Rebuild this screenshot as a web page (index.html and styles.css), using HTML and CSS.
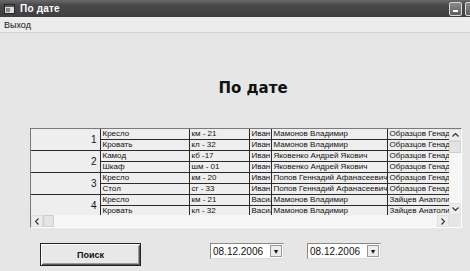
FILE: index.html
```html
<!DOCTYPE html>
<html lang="ru">
<head>
    <meta charset="UTF-8">
    <title>По дате</title>
    <link rel="stylesheet" href="styles.css">
</head>
<body>
    <div class="window">
        <!-- заголовок окна -->
        <div class="titlebar">
            <svg class="app-icon" width="11" height="10" viewBox="0 0 11 10">
                <rect x="0.5" y="0.5" width="10" height="9" fill="#ddd" stroke="#222"/>
                <rect x="1" y="1" width="9" height="2" fill="#555"/>
                <rect x="2" y="4" width="4" height="4" fill="#888"/>
            </svg>
            <span class="title-text">По дате</span>
            <div class="title-btns">
                <span class="tbtn"><span class="min-bar"></span></span>
                <span class="tbtn tbtn-cut"></span>
            </div>
        </div>

        <!-- меню -->
        <div class="menubar">
            <span class="menu-item">Выход</span>
        </div>

        <div class="content">
            <h1 class="heading">По дате</h1>

            <!-- таблица -->
            <div class="grid-wrap">
                <div class="grid-area">
                    <table class="grid">
                        <colgroup>
                            <col style="width:69px">
                            <col style="width:89px">
                            <col style="width:60px">
                            <col style="width:22px">
                            <col style="width:116px">
                            <col style="width:80px">
                        </colgroup>
                        <tr><td class="rh" rowspan="2">1</td><td>Кресло</td><td>км - 21</td><td>Иван</td><td>Мамонов Владимир</td><td>Образцов Генадий</td></tr>
                        <tr><td>Кровать</td><td>кл - 32</td><td>Иван</td><td>Мамонов Владимир</td><td>Образцов Генадий</td></tr>
                        <tr><td class="rh" rowspan="2">2</td><td>Камод</td><td>кб -17</td><td>Иван</td><td>Яковенко Андрей Якович</td><td>Образцов Генадий</td></tr>
                        <tr><td>Шкаф</td><td>шм - 01</td><td>Иван</td><td>Яковенко Андрей Якович</td><td>Образцов Генадий</td></tr>
                        <tr><td class="rh" rowspan="2">3</td><td>Кресло</td><td>км - 20</td><td>Иван</td><td>Попов Геннадий Афанасеевич</td><td>Образцов Генадий</td></tr>
                        <tr><td>Стол</td><td>сг - 33</td><td>Иван</td><td>Попов Геннадий Афанасеевич</td><td>Образцов Генадий</td></tr>
                        <tr><td class="rh" rowspan="2">4</td><td>Кресло</td><td>км - 21</td><td>Васил</td><td>Мамонов Владимир</td><td>Зайцев Анатолий</td></tr>
                        <tr><td>Кровать</td><td>кл - 32</td><td>Васил</td><td>Мамонов Владимир</td><td>Зайцев Анатолий</td></tr>
                    </table>
                </div>
                <div class="vscroll">
                    <span class="sbtn"><svg width="7" height="4" viewBox="0 0 7 4"><path d="M0.5 3.5 L3.5 0.5 L6.5 3.5" fill="none" stroke="#333" stroke-width="1.2"/></svg></span>
                    <span class="thumb"></span>
                    <span class="vspace"></span>
                    <span class="sbtn"><svg width="7" height="4" viewBox="0 0 7 4"><path d="M0.5 0.5 L3.5 3.5 L6.5 0.5" fill="none" stroke="#333" stroke-width="1.2"/></svg></span>
                </div>
                <div class="hscroll">
                    <span class="sbtn"><svg width="4" height="7" viewBox="0 0 4 7"><path d="M3.5 0.5 L0.5 3.5 L3.5 6.5" fill="none" stroke="#333" stroke-width="1.2"/></svg></span>
                    <span class="thumb"></span>
                    <span class="hspace"></span>
                    <span class="sbtn"><svg width="4" height="7" viewBox="0 0 4 7"><path d="M0.5 0.5 L3.5 3.5 L0.5 6.5" fill="none" stroke="#333" stroke-width="1.2"/></svg></span>
                </div>
                <div class="corner"></div>
            </div>

            <!-- кнопка и даты -->
            <div class="bottom">
                <button class="search-btn">Поиск</button>
                <div class="combo combo-first">
                    <span class="combo-text">08.12.2006</span>
                    <span class="combo-arrow">&#9662;</span>
                </div>
                <div class="combo">
                    <span class="combo-text">08.12.2006</span>
                    <span class="combo-arrow">&#9662;</span>
                </div>
            </div>
        </div>
    </div>
</body>
</html>
```

FILE: styles.css
```css
body {
    margin: 0;
    width: 470px;
    height: 271px;
    overflow: hidden;
    background: #e6e6e6;
    font-family: "Liberation Sans", Arial, sans-serif;
    color: #111;
}
.window {
    display: flex;
    flex-direction: column;
    height: 271px;
}
.titlebar {
    height: 17px;
    display: flex;
    align-items: center;
    padding-left: 4px;
    background: linear-gradient(to bottom, #6a6a6a 0%, #4a4a4a 30%, #3e3e3e 100%);
    color: #fff;
}
.app-icon {
    margin-right: 5px;
}
.title-text {
    font-weight: bold;
    font-size: 10px;
    letter-spacing: 0.2px;
}
.title-btns {
    margin-left: auto;
    display: flex;
    gap: 3px;
    margin-right: -8px;
}
.tbtn {
    width: 11px;
    height: 12px;
    border: 1px solid #d8d8d8;
    border-radius: 2px;
    background: linear-gradient(to bottom, #8a8a8a, #5e5e5e);
    display: flex;
    align-items: flex-end;
    justify-content: center;
}
.min-bar {
    width: 5px;
    height: 2px;
    background: #fff;
    margin-bottom: 3px;
}
.menubar {
    height: 15px;
    display: flex;
    align-items: center;
    padding-left: 4px;
    background: #ececec;
    border-bottom: 1px solid #d2d2d2;
    font-size: 9px;
}
.content {
    flex: 1;
    display: flex;
    flex-direction: column;
}
.heading {
    margin: 45px 0 0;
    height: 20px;
    line-height: 20px;
    text-align: center;
    font-family: "DejaVu Sans", sans-serif;
    font-size: 15px;
    font-weight: bold;
    padding-left: 36px;
}
.grid-wrap {
    margin: 30px 0 0 30px;
    width: 432px;
    height: 100px;
    box-sizing: border-box;
    border: 1px solid #7a7a7a;
    border-right-color: #fff;
    border-bottom-color: #fff;
    display: grid;
    grid-template-columns: 1fr 12px;
    grid-template-rows: 1fr 12px;
    background: #ebebeb;
}
.grid-area {
    overflow: hidden;
}
.grid {
    border-collapse: collapse;
    table-layout: fixed;
    width: 436px;
    font-size: 8px;
}
.grid td {
    height: 10px;
    line-height: 10px;
    padding: 0 0 0 2px;
    border: 1px solid #2a2a2a;
    white-space: nowrap;
    overflow: hidden;
    background: #eeeeee;
}
.grid tr:first-child td {
    border-top: none;
}
.grid td:first-child {
    border-left: none;
}
.grid td.rh {
    text-align: right;
    padding-right: 3px;
    font-size: 10px;
}
.vscroll, .hscroll {
    display: flex;
    background: #f6f6f6;
}
.vscroll {
    flex-direction: column;
}
.vspace, .hspace {
    flex: 1;
}
.sbtn {
    width: 12px;
    height: 12px;
    display: flex;
    align-items: center;
    justify-content: center;
    background: #ececec;
    box-sizing: border-box;
    border: 1px solid #e0e0e0;
}
.thumb {
    width: 12px;
    height: 12px;
    box-sizing: border-box;
    border: 1px solid #cfcfcf;
    background: #e4e4e4;
}
.hscroll .thumb {
    width: 11px;
}
.corner {
    background: #e6e6e6;
}
.bottom {
    margin-top: 15px;
    display: flex;
    align-items: flex-start;
}
.search-btn {
    margin-left: 40px;
    width: 101px;
    height: 23px;
    box-sizing: border-box;
    border: 1px solid #222;
    outline: none;
    background: #e8e8e8;
    box-shadow: inset 1px 1px 0 #fff, inset -1px -1px 0 #555, inset 2px 2px 0 #e8e8e8, inset -2px -2px 0 #999;
    font-family: "Liberation Sans", Arial, sans-serif;
    font-size: 9px;
    font-weight: bold;
    color: #111;
    padding: 0;
}
.combo {
    margin-left: 23px;
    width: 74px;
    height: 16px;
    box-sizing: border-box;
    border: 1px solid #888;
    border-right-color: #ddd;
    border-bottom-color: #ddd;
    background: #fff;
    display: flex;
    align-items: center;
}
.combo-first {
    margin-left: 69px;
}
.combo-text {
    flex: 1;
    padding-left: 2px;
    font-size: 10px;
}
.combo-arrow {
    width: 12px;
    height: 12px;
    margin-right: 1px;
    box-sizing: border-box;
    border: 1px solid #999;
    background: #ececec;
    font-size: 8px;
    display: flex;
    align-items: center;
    justify-content: center;
}
```
